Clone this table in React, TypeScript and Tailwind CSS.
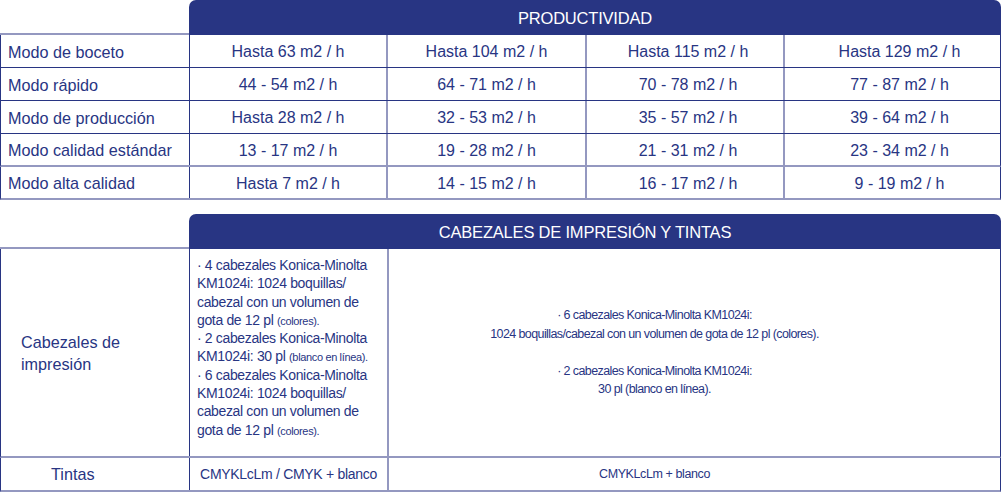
const rows = [
  ['Modo de boceto', 'Hasta 63 m2 / h', 'Hasta 104 m2 / h', 'Hasta 115 m2 / h', 'Hasta 129 m2 / h'],
  ['Modo rápido', '44 - 54 m2 / h', '64 - 71 m2 / h', '70 - 78 m2 / h', '77 - 87 m2 / h'],
  ['Modo de producción', 'Hasta 28 m2 / h', '32 - 53 m2 / h', '35 - 57 m2 / h', '39 - 64 m2 / h'],
  ['Modo calidad estándar', '13 - 17 m2 / h', '19 - 28 m2 / h', '21 - 31 m2 / h', '23 - 34 m2 / h'],
  ['Modo alta calidad', 'Hasta 7 m2 / h', '14 - 15 m2 / h', '16 - 17 m2 / h', '9 - 19 m2 / h'],
];

const cellPad = ['', '', 'pl-[6px]', 'pl-[14px]'];

export default function App() {
  return (
    <div className="w-[1001px] h-[492px] bg-white text-[#283583] font-['Liberation_Sans',Arial,sans-serif] overflow-hidden">
      {/* Productividad */}
      <div className="flex h-[35px]">
        <div className="w-[189px] border-b-2 border-[#9498c0]" />
        <div className="flex-1 bg-[#283583] rounded-t-[7px] flex items-center justify-center pr-[20px] pt-[1px] text-white text-[16.5px] tracking-[-0.2px]">
          PRODUCTIVIDAD
        </div>
      </div>
      {rows.map((r, i) => (
        <div
          key={i}
          className={`grid grid-cols-[189px_198px_199px_198px_1fr] h-[33px] border-l border-r border-[#283583] ${
            i < 3 ? 'border-b border-b-[#283583]' : 'border-b-2 border-b-[#9498c0]'
          }`}
        >
          <div className="border-r border-[#283583] flex items-center pl-[7px] pt-[2px] text-[16.2px]">{r[0]}</div>
          {r.slice(1).map((c, j) => (
            <div
              key={j}
              className={`flex items-center justify-center pt-[2px] text-[16px] ${cellPad[j]} ${
                j < 3 ? 'border-r-2 border-[#9498c0]' : ''
              }`}
            >
              {c}
            </div>
          ))}
        </div>
      ))}

      {/* Cabezales */}
      <div className="flex h-[35px] mt-[14px]">
        <div className="w-[189px] border-b-2 border-[#9498c0]" />
        <div className="flex-1 bg-[#283583] rounded-t-[7px] flex items-center justify-center pr-[20px] pt-[1px] text-white text-[16.5px] tracking-[-0.2px]">
          CABEZALES DE IMPRESIÓN Y TINTAS
        </div>
      </div>
      <div className="grid grid-cols-[189px_199px_1fr] h-[209px] border-l border-r border-[#283583] border-b-2 border-b-[#9498c0]">
        <div className="border-r border-[#283583] flex items-center pl-[20px] text-[16.2px] leading-[22px]">
          Cabezales de
          <br />
          impresión
        </div>
        <div className="border-r-2 border-[#9498c0] pl-[7px] pr-[2px] pt-[7px] text-[14px] tracking-[-0.35px] leading-[18.3px]">
          <p>
            · 4 cabezales Konica-Minolta KM1024i: 1024 boquillas/ cabezal con un volumen de gota de 12 pl{' '}
            <span className="text-[11px] leading-none">(colores).</span>
          </p>
          <p>
            · 2 cabezales Konica-Minolta KM1024i: 30 pl{' '}
            <span className="text-[11px] leading-none">(blanco en línea).</span>
          </p>
          <p>
            · 6 cabezales Konica-Minolta KM1024i: 1024 boquillas/ cabezal con un volumen de gota de 12 pl{' '}
            <span className="text-[11px] leading-none">(colores).</span>
          </p>
        </div>
        <div className="flex items-center justify-center pr-[80px] text-[12.5px] tracking-[-0.6px] leading-[18.5px] text-center">
          <div>
            · 6 cabezales Konica-Minolta KM1024i:
            <br />
            1024 boquillas/cabezal con un volumen de gota de 12 pl (colores).
            <br />
            <br />
            · 2 cabezales Konica-Minolta KM1024i:
            <br />
            30 pl (blanco en línea).
          </div>
        </div>
      </div>
      <div className="grid grid-cols-[189px_199px_1fr] h-[34px] border-l border-r border-[#283583] border-b-2 border-b-[#9498c0]">
        <div className="border-r border-[#283583] flex items-center pl-[50px] text-[16.2px]">Tintas</div>
        <div className="border-r-2 border-[#9498c0] flex items-center justify-center text-[14px] tracking-[-0.3px]">
          CMYKLcLm / CMYK + blanco
        </div>
        <div className="flex items-center justify-center pr-[80px] text-[12.5px] tracking-[-0.4px]">CMYKLcLm + blanco</div>
      </div>
    </div>
  );
}
